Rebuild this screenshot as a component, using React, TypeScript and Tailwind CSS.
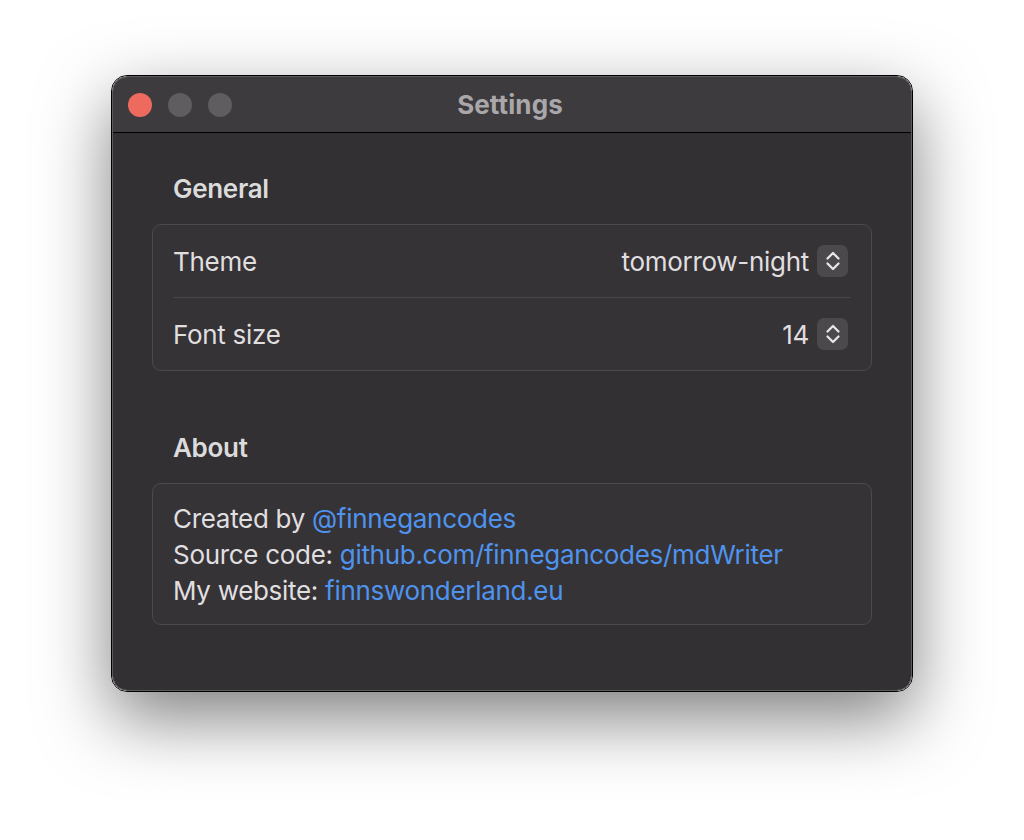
function Stepper() {
  return (
    <span className="mr-[3px] flex h-[32px] w-[31px] items-center justify-center rounded-[7px] bg-[#4b494b] text-[#e6e6e6]">
      <svg width="18" height="22" viewBox="0 0 18 22" fill="none" stroke="currentColor" strokeWidth={2.3} strokeLinecap="round" strokeLinejoin="round">
        <path d="M3.5 8.5 L9 3 L14.5 8.5" />
        <path d="M3.5 13.5 L9 19 L14.5 13.5" />
      </svg>
    </span>
  );
}

function Row({ label, value }: { label: string; value: string }) {
  return (
    <div className="flex h-[72px] items-center justify-between">
      <span>{label}</span>
      <span className="flex items-center gap-[8px]">
        <span>{value}</span>
        <Stepper />
      </span>
    </div>
  );
}

export default function App() {
  return (
    <div
      className="flex h-[840px] w-[1024px] items-start justify-center bg-white pt-[75px]"
      style={{ fontFamily: 'Inter, "Noto Sans", sans-serif' }}
    >
      <div className="w-[802px] overflow-hidden rounded-[16px] border border-black shadow-[0_26px_70px_rgba(0,0,0,0.5)]">
        <div className="overflow-hidden rounded-[15px] border border-[#5c5a5c]">
          {/* title bar */}
          <div className="relative flex h-[56px] items-center border-b border-black bg-[#3d3b3d] px-[15px]">
            <div className="flex gap-[16px]">
              <span className="h-[24px] w-[24px] rounded-full bg-[#ee6a5e]" />
              <span className="h-[24px] w-[24px] rounded-full bg-[#5f5d5f]" />
              <span className="h-[24px] w-[24px] rounded-full bg-[#5f5d5f]" />
            </div>
            <div className="absolute inset-0 flex items-center justify-center pr-[4px] text-[26px] font-bold tracking-[0.1px] text-[#a9a7a9]">
              Settings
            </div>
          </div>
          {/* body */}
          <div className="h-[557px] bg-[#323032] px-[39px] pt-[40px] text-[26px] tracking-[-0.3px] text-[#e0dfe0]">
            <div className="px-[21px] pb-[19px] font-semibold leading-[32px] text-[#dcdbdc]">General</div>
            <div className="rounded-[9px] border border-[#4c4a4c] bg-[#353335] px-[20px]">
              <div className="border-b border-[#474547]">
                <Row label="Theme" value="tomorrow-night" />
              </div>
              <Row label="Font size" value="14" />
            </div>
            <div className="px-[21px] pb-[19px] pt-[61px] font-semibold leading-[32px] text-[#dcdbdc]">About</div>
            <div className="rounded-[9px] border border-[#4c4a4c] bg-[#353335] px-[20px] pb-[15px] pt-[17px] leading-[36px]">
              <div>
                Created by <span className="text-[#4f93ef]">@finnegancodes</span>
              </div>
              <div>
                Source code: <span className="text-[#4f93ef]">github.com/finnegancodes/mdWriter</span>
              </div>
              <div>
                My website: <span className="text-[#4f93ef]">finnswonderland.eu</span>
              </div>
            </div>
          </div>
        </div>
      </div>
    </div>
  );
}
